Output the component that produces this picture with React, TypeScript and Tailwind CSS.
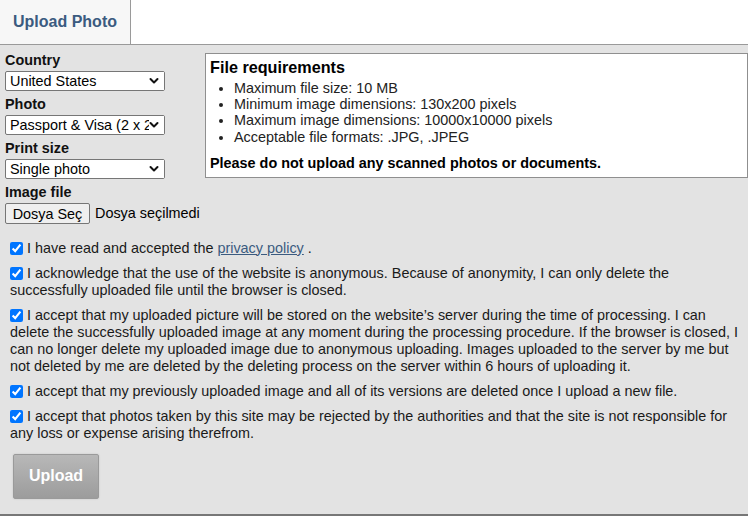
import React from 'react';

const font = { fontFamily: '"Liberation Sans", Arial, sans-serif' };

const Chevron = () => (
  <svg
    className="pointer-events-none absolute right-[6px] top-1/2 -translate-y-1/2"
    width="10"
    height="7"
    viewBox="0 0 10 7"
    fill="none"
  >
    <path d="M1.5 1.5 L5 5 L8.5 1.5" stroke="#111" strokeWidth="2" strokeLinecap="round" strokeLinejoin="round" />
  </svg>
);

interface FieldProps {
  label: string;
  options: string[];
}

const SelectField: React.FC<FieldProps> = ({ label, options }) => (
  <div>
    <div className="text-[14.4px] font-bold leading-[17px] text-[#111]">{label}</div>
    <div className="relative mt-[2px] mb-[5px] w-[160px]">
      <select
        defaultValue={options[0]}
        className="block h-[20px] w-[160px] appearance-none rounded-[2px] border border-[#767676] bg-white pl-[4px] pr-[14px] text-[14.4px] leading-[18px] text-black"
      >
        {options.map((o) => (
          <option key={o}>{o}</option>
        ))}
      </select>
      <div className="pointer-events-none absolute right-[1px] top-[1px] h-[18px] w-[15px] bg-white" />
      <Chevron />
    </div>
  </div>
);

const terms: React.ReactNode[] = [
  <>
    I have read and accepted the{' '}
    <a href="#" className="text-[#3b5b80] underline">privacy policy</a> .
  </>,
  'I acknowledge that the use of the website is anonymous. Because of anonymity, I can only delete the successfully uploaded file until the browser is closed.',
  'I accept that my uploaded picture will be stored on the website’s server during the time of processing. I can delete the successfully uploaded image at any moment during the processing procedure. If the browser is closed, I can no longer delete my uploaded image due to anonymous uploading. Images uploaded to the server by me but not deleted by me are deleted by the deleting process on the server within 6 hours of uploading it.',
  'I accept that my previously uploaded image and all of its versions are deleted once I upload a new file.',
  'I accept that photos taken by this site may be rejected by the authorities and that the site is not responsible for any loss or expense arising therefrom.',
];

export default function App() {
  return (
    <div className="w-[748px] h-[516px] overflow-hidden bg-white" style={font}>
      {/* tabs */}
      <div className="flex h-[45px] border-b border-[#9a9a9a] bg-white">
        <div className="flex w-[131px] items-center border-r border-[#9a9a9a] bg-[#f7f7f7] pl-[13px] text-[16px] font-bold text-[#3b5b80]">
          Upload Photo
        </div>
      </div>

      <div className="h-[471px] border-b-2 border-[#777] bg-[#e3e3e3] text-[#1a1a1a]">
        <div className="flex pt-[7px] pl-[5px]">
          <div className="w-[200px]">
            <SelectField label="Country" options={['United States']} />
            <SelectField label="Photo" options={['Passport & Visa (2 x 2 inch)']} />
            <SelectField label="Print size" options={['Single photo']} />
            <div className="text-[14.4px] font-bold leading-[17px] text-[#111]">Image file</div>
            <div className="mt-[2px] flex items-center">
              <button className="h-[21px] w-[85px] rounded-[2px] border border-[#767676] bg-[#efefef] text-[14.4px] text-black">
                Dosya Seç
              </button>
              <span className="ml-[5px] text-[14.4px] text-black">Dosya seçilmedi</span>
            </div>
          </div>

          <div className="mt-[1px] h-[125px] flex-1 border border-[#8f8f8f] bg-white px-[4px] pt-[4px] text-black">
            <div className="text-[16.2px] font-bold leading-[18px]">File requirements</div>
            <ul className="mt-[4px] list-disc pl-[24px] text-[14.4px] leading-[16.2px] text-[#222]">
              <li>Maximum file size: 10 MB</li>
              <li>Minimum image dimensions: 130x200 pixels</li>
              <li>Maximum image dimensions: 10000x10000 pixels</li>
              <li>Acceptable file formats: .JPG, .JPEG</li>
            </ul>
            <div className="mt-[10px] text-[14.4px] font-bold leading-[16px]">
              Please do not upload any scanned photos or documents.
            </div>
          </div>
        </div>

        <div className="mt-[15px] pl-[10px] pr-[6px]">
          {terms.map((t, i) => (
            <p key={i} className="mb-[8px] text-[14.4px] leading-[17px] text-[#1a1a1a]">
              <input
                type="checkbox"
                defaultChecked
                className="mr-[4px] h-[13px] w-[13px] align-[-2px] accent-[#0075ff]"
              />
              {t}
            </p>
          ))}
        </div>

        <div className="pl-[13px] pt-[4px]">
          <button className="h-[45px] w-[86px] rounded-[2px] border border-[#9a9a9a] bg-gradient-to-b from-[#b8b8b8] to-[#9c9c9c] text-[16px] font-bold text-white shadow-[0_0_2px_rgba(0,0,0,0.15)]">
            Upload
          </button>
        </div>
      </div>
    </div>
  );
}
